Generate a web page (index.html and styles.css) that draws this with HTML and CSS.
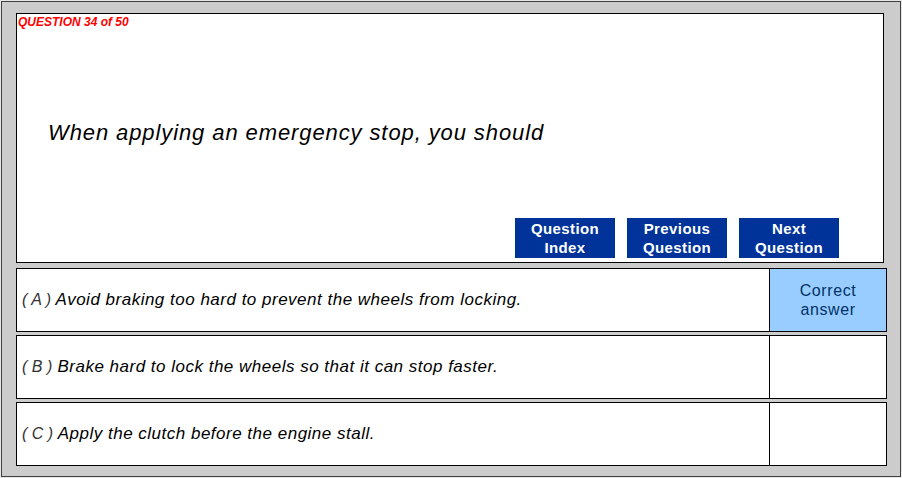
FILE: index.html
```html
<!DOCTYPE html>
<html lang="en">
<head>
    <meta charset="UTF-8">
    <title>Question 34 of 50</title>
    <link rel="stylesheet" href="styles.css">
</head>
<body>
    <div class="frame">
        <div class="question-box">
            <div class="counter">QUESTION 34 of 50</div>
            <div class="question-text">When applying an emergency stop, you should</div>
            <div class="nav">
                <button class="nav-btn">Question<br>Index</button>
                <button class="nav-btn">Previous<br>Question</button>
                <button class="nav-btn">Next<br>Question</button>
            </div>
        </div>

        <div class="answer">
            <div class="answer-text"><span class="letter">( A )</span> Avoid braking too hard to prevent the wheels from locking.</div>
            <div class="answer-mark correct">Correct<br>answer</div>
        </div>
        <div class="answer">
            <div class="answer-text"><span class="letter">( B )</span> Brake hard to lock the wheels so that it can stop faster.</div>
            <div class="answer-mark"></div>
        </div>
        <div class="answer">
            <div class="answer-text"><span class="letter">( C )</span> Apply the clutch before the engine stall.</div>
            <div class="answer-mark"></div>
        </div>
    </div>
</body>
</html>
```

FILE: styles.css
```css
body {
    margin: 0;
    background-color: #e8e8e8;
    font-family: 'Liberation Sans', Arial, sans-serif;
}

.frame {
    box-sizing: border-box;
    width: 900px;
    height: 476px;
    margin: 1px;
    border: 1px solid #404040;
    background-color: #cccccc;
    padding: 11px 0 0 14px;
}

.question-box {
    box-sizing: border-box;
    width: 868px;
    height: 250px;
    border: 1px solid #000;
    background-color: #fff;
    display: flex;
    flex-direction: column;
}

.counter {
    color: #ff0000;
    font-size: 12px;
    font-weight: bold;
    font-style: italic;
    padding: 2px 0 0 1px;
    line-height: 13px;
}

.question-text {
    flex: 1;
    font-size: 22px;
    font-style: italic;
    letter-spacing: 0.9px;
    color: #000;
    padding: 91px 0 0 31px;
}

.nav {
    display: flex;
    justify-content: flex-end;
    gap: 12px;
    padding: 0 44px 4px 0;
}

.nav-btn {
    width: 100px;
    height: 40px;
    border: none;
    padding: 0;
    background-color: #003399;
    color: #fff;
    font-family: 'Liberation Sans', Arial, sans-serif;
    font-size: 15px;
    font-weight: bold;
    letter-spacing: 0.4px;
    line-height: 19px;
}

.answer {
    box-sizing: border-box;
    width: 871px;
    height: 64px;
    margin-top: 5px;
    border: 1px solid #000;
    background-color: #fff;
    display: grid;
    grid-template-columns: 1fr 116px;
}

.answer + .answer {
    margin-top: 3px;
}

.answer-text {
    border-right: 1px solid #000;
    display: flex;
    align-items: center;
    padding-left: 5px;
    font-size: 17px;
    font-style: italic;
    letter-spacing: 0.5px;
    color: #000;
    white-space: pre;
}

.letter {
    color: #333;
    font-size: 16px;
    font-weight: 300;
    letter-spacing: 0;
}

.answer-mark {
    display: flex;
    align-items: center;
    justify-content: center;
    text-align: center;
    font-size: 16px;
    line-height: 19px;
    letter-spacing: 0.6px;
    color: #003366;
}

.answer-mark.correct {
    background-color: #99ccff;
}
```
